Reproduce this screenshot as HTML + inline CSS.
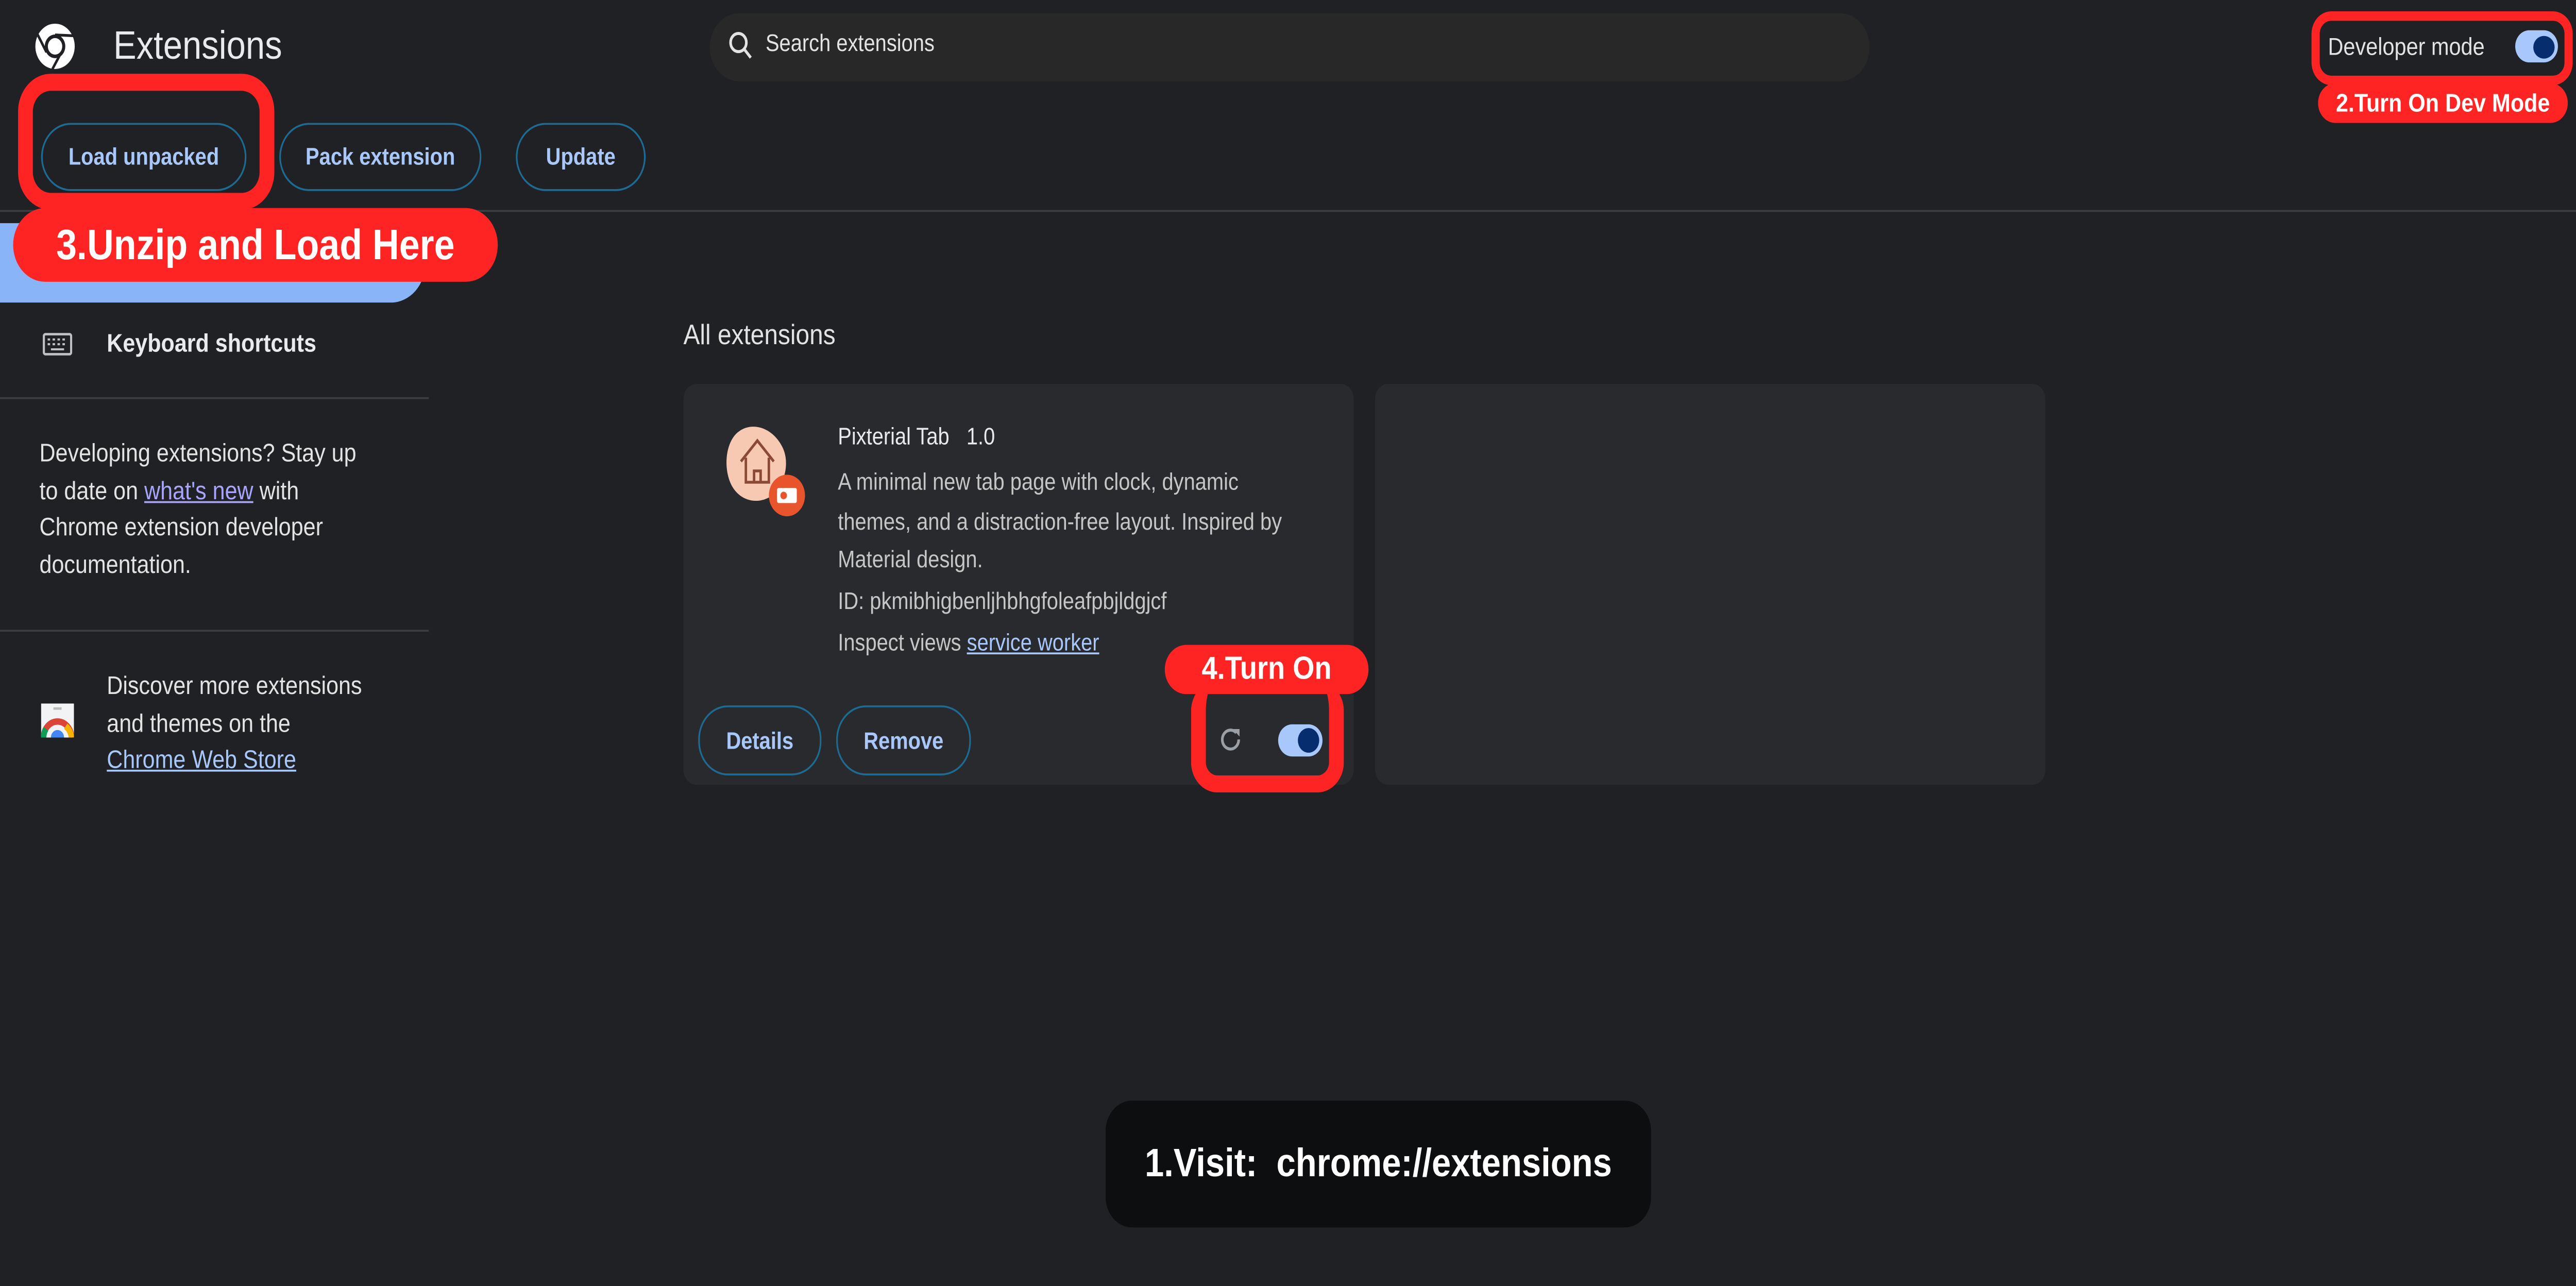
<!DOCTYPE html>
<html><head><meta charset="utf-8"><style>
html,body{margin:0;padding:0;background:#202124;overflow:hidden;width:100%;height:100%}
#s{position:fixed;left:0;top:0;width:100vw;height:100vh;display:block}
#w{position:relative;width:1568px;height:680px;overflow:hidden;background:#202124;font-family:"Liberation Sans",sans-serif;color:#e8eaed}
.a{position:absolute}
.btn{position:absolute;border:1px solid #1d6b93;border-radius:18px;color:#a8c7fa;font-weight:bold;font-size:12.5px;display:flex;align-items:center;justify-content:center;box-sizing:border-box}
.red{position:absolute;background:#ff2424;color:#fff;font-weight:bold;display:flex;align-items:center;justify-content:center;border-radius:20px;white-space:nowrap}
.box{position:absolute;border:solid #ff2424;box-sizing:border-box}
.hr{position:absolute;height:1px;background:#3c3d40}
.t{position:absolute;font-size:13.5px;line-height:19.5px;color:#e3e3e3;white-space:nowrap}
a{color:#a8c7fa;text-decoration:underline}
</style></head><body>
<svg id="s" viewBox="0 0 1568 680" preserveAspectRatio="none" xmlns="http://www.w3.org/2000/svg"><foreignObject x="0" y="0" width="1568" height="680"><div xmlns="http://www.w3.org/1999/xhtml" id="w">
<svg class="a" style="left:21px;top:12px" width="25" height="25" viewBox="0 0 24 24"><circle cx="12" cy="12" r="11.5" fill="#fff"/><circle cx="12" cy="12" r="6" fill="#202124"/><circle cx="12" cy="12" r="4.2" fill="#fff"/><path d="M12 6.2 L22.5 6.6" stroke="#202124" stroke-width="1.4"/><path d="M7 15 L1.8 6" stroke="#202124" stroke-width="1.4"/><path d="M15.4 15.5 L10.5 23.5" stroke="#202124" stroke-width="1.4"/></svg>
<div class="a" style="left:69px;top:13px;font-size:21px;color:#e8eaed">Extensions</div>
<div class="a" style="left:432px;top:7px;width:706px;height:36px;border-radius:18px;background:#282828"></div>
<svg class="a" style="left:443px;top:16px" width="16" height="16" viewBox="0 0 16 16"><circle cx="6.5" cy="6.5" r="4.8" fill="none" stroke="#e3e3e3" stroke-width="1.6"/><path d="M10 10 L14 14.5" stroke="#e3e3e3" stroke-width="1.6"/></svg>
<div class="a" style="left:466px;top:16px;font-size:12.5px;color:#e3e3e3">Search extensions</div>
<div class="a" style="left:1417px;top:17px;font-size:13px;color:#e3e3e3">Developer mode</div>
<div class="a" style="left:1531px;top:16px;width:26px;height:17px;border-radius:9px;background:#a8c7fa"></div>
<div class="a" style="left:1542px;top:18.5px;width:13px;height:12px;border-radius:50%;background:#062e6f"></div>
<div class="box" style="left:1407px;top:6px;width:159px;height:39px;border-width:5px;border-radius:12px"></div>
<div class="red" style="left:1411px;top:44px;width:152px;height:21px;font-size:13.5px;border-radius:11px">2.Turn On Dev Mode</div>
<div class="btn" style="left:25px;top:65px;width:125px;height:36px">Load unpacked</div>
<div class="btn" style="left:170px;top:65px;width:123px;height:36px">Pack extension</div>
<div class="btn" style="left:314px;top:65px;width:79px;height:36px">Update</div>
<div class="hr" style="left:0;top:111px;width:1568px"></div>
<div class="a" style="left:0;top:118px;width:259px;height:42px;background:#8ab4f8;border-radius:0 21px 21px 0"></div>
<div class="box" style="left:11px;top:39px;width:156px;height:72px;border-width:9px;border-radius:20px"></div>
<div class="red" style="left:8px;top:110px;width:295px;height:39px;font-size:22.5px">3.Unzip and Load Here</div>
<svg class="a" style="left:26px;top:176px" width="18" height="12" viewBox="0 0 18 12"><rect x="0.7" y="0.7" width="16.6" height="10.6" rx="1" fill="none" stroke="#bdc1c6" stroke-width="1.3"/><path d="M3 3.5h1.5M6 3.5h1.5M9 3.5h1.5M12 3.5h1.5M3 6h1.5M6 6h1.5M9 6h1.5M12 6h1.5M5 8.7h8" stroke="#bdc1c6" stroke-width="1.1"/></svg>
<div class="a" style="left:65px;top:174px;font-size:13.5px;font-weight:bold;color:#e8eaed">Keyboard shortcuts</div>
<div class="hr" style="left:0;top:210px;width:261px"></div>
<div class="t" style="left:24px;top:230px">Developing extensions? Stay up<br/>to date on <a style="color:#a8a5ff">what's new</a> with<br/>Chrome extension developer<br/>documentation.</div>
<div class="hr" style="left:0;top:333px;width:261px"></div>
<svg class="a" style="left:25px;top:372px" width="20" height="18" viewBox="0 0 20 18"><rect width="20" height="18" fill="#f1f3f4"/><rect x="7.5" y="2" width="5" height="1.3" fill="#bbb"/><path d="M1.5 18 A8.5 8.5 0 0 1 18.5 18" fill="none" stroke="#db4437" stroke-width="3.4"/><path d="M1.5 18 A8.5 8.5 0 0 1 3 13.4" fill="none" stroke="#0f9d58" stroke-width="3.4"/><path d="M15 12 A8.5 8.5 0 0 1 18.5 18" fill="none" stroke="#f4b400" stroke-width="3.4"/><circle cx="10" cy="18" r="4" fill="#4285f4"/></svg>
<div class="t" style="left:65px;top:353px">Discover more extensions<br/>and themes on the<br/><a>Chrome Web Store</a></div>
<div class="a" style="left:416px;top:169px;font-size:15px;color:#e3e3e3">All extensions</div>
<div class="a" style="left:416px;top:203px;width:408px;height:212px;border-radius:8px;background:#292a2d"></div>
<div class="a" style="left:837px;top:203px;width:408px;height:212px;border-radius:8px;background:#292a2d"></div>
<svg class="a" style="left:440px;top:224px" width="52" height="50" viewBox="0 0 52 50"><path d="M10 4 C18 -1 30 2 36 12 C41 20 38 32 30 38 C20 44 8 40 4 30 C0 20 3 8 10 4Z" fill="#f8c9b2"/><path d="M11 20 L21 9 L31 20 M14 18 V31 H28 V18 M19 31 V25 H23 V31" fill="none" stroke="#8a4a35" stroke-width="1.5"/><circle cx="39" cy="38" r="11" fill="#e8552d"/><rect x="33" y="34" width="12" height="8" rx="1" fill="#fff"/><circle cx="37" cy="38" r="2" fill="#e8552d"/></svg>
<div class="a" style="left:510px;top:224px;font-size:12.5px;color:#e8eaed">Pixterial Tab&#160;&#160; 1.0</div>
<div class="a" style="left:510px;top:245px;font-size:12.5px;line-height:20.5px;color:#c4c7c5;white-space:nowrap">A minimal new tab page with clock, dynamic<br/>themes, and a distraction-free layout. Inspired by<br/>Material design.</div>
<div class="a" style="left:510px;top:311px;font-size:12.5px;color:#c4c7c5">ID: pkmibhigbenljhbhgfoleafpbjldgjcf</div>
<div class="a" style="left:510px;top:333px;font-size:12.5px;color:#c4c7c5">Inspect views <a>service worker</a></div>
<div class="btn" style="left:425px;top:373px;width:75px;height:37px">Details</div>
<div class="btn" style="left:509px;top:373px;width:82px;height:37px">Remove</div>
<svg class="a" style="left:741px;top:383px" width="16" height="16" viewBox="0 0 16 16"><path d="M13 8 A5 5 0 1 1 11.5 4.5" fill="none" stroke="#9aa0a6" stroke-width="1.6"/><path d="M9.5 2.5 H13.5 V6.5Z" fill="#9aa0a6"/></svg>
<div class="a" style="left:778px;top:383px;width:27px;height:17px;border-radius:9px;background:#a8c7fa"></div>
<div class="a" style="left:790px;top:385px;width:13px;height:13px;border-radius:50%;background:#062e6f"></div>
<div class="box" style="left:725px;top:360px;width:93px;height:59px;border-width:9px;border-radius:16px;border-top:none"></div>
<div class="red" style="left:709px;top:341px;width:124px;height:26px;font-size:17px;border-radius:13px">4.Turn On</div>
<div class="a" style="left:673px;top:582px;width:332px;height:67px;border-radius:16px;background:#0d0e10;color:#fff;font-size:21px;font-weight:bold;display:flex;align-items:center;justify-content:center;white-space:nowrap">1.Visit:&#160; chrome://extensions</div>
</div></foreignObject></svg>
</body></html>
